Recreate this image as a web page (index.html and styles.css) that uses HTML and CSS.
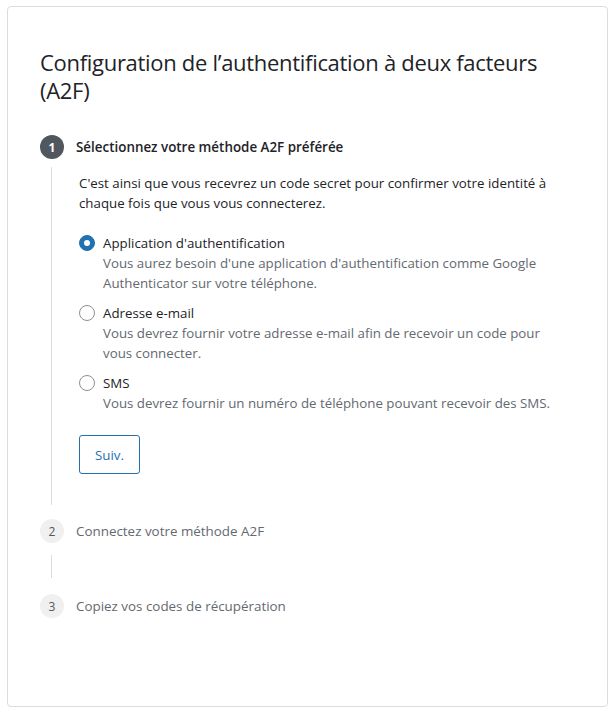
FILE: index.html
```html
<!DOCTYPE html>
<html lang="fr">
<head>
<meta charset="utf-8">
<link rel="stylesheet" href="styles.css">
</head>
<body>
<div class="card">
  <h1 class="title">Configuration de l’authentification à deux facteurs (A2F)</h1>
  <div class="step">
    <div class="step-head active"><span class="num">1</span><span class="label">Sélectionnez votre méthode A2F préférée</span></div>
    <div class="step-body body-1">
      <p class="intro">C'est ainsi que vous recevrez un code secret pour confirmer votre identité à chaque fois que vous vous connecterez.</p>
      <div class="options">
        <div class="option">
          <span class="radio checked"></span>
          <div class="opt-text">
            <div class="opt-title">Application d'authentification</div>
            <div class="opt-desc">Vous aurez besoin d'une application d'authentification comme Google Authenticator sur votre téléphone.</div>
          </div>
        </div>
        <div class="option">
          <span class="radio"></span>
          <div class="opt-text">
            <div class="opt-title">Adresse e-mail</div>
            <div class="opt-desc">Vous devrez fournir votre adresse e-mail afin de recevoir un code pour vous connecter.</div>
          </div>
        </div>
        <div class="option">
          <span class="radio"></span>
          <div class="opt-text">
            <div class="opt-title">SMS</div>
            <div class="opt-desc">Vous devrez fournir un numéro de téléphone pouvant recevoir des SMS.</div>
          </div>
        </div>
      </div>
      <button class="btn">Suiv.</button>
    </div>
  </div>
  <div class="step">
    <div class="step-head"><span class="num">2</span><span class="label">Connectez votre méthode A2F</span></div>
    <div class="step-body body-2"></div>
  </div>
  <div class="step">
    <div class="step-head"><span class="num">3</span><span class="label">Copiez vos codes de récupération</span></div>
  </div>
</div>
</body>
</html>
```

FILE: styles.css
```css
* { box-sizing: border-box; }
body {
  margin: 0;
  background: #fff;
  font-family: "Open Sans", "Noto Sans", sans-serif;
  color: #1d2327;
}
.card {
  margin: 6px 0 0 7px;
  width: 601px;
  height: 701px;
  border: 1px solid #dcdcde;
  border-radius: 4px;
  padding: 41px 32px 0 32px;
}
.title {
  margin: 0;
  font-size: 22px;
  line-height: 28px;
  font-weight: 500;
  color: #1d2327;
  letter-spacing: -0.3px;
}
.step-head {
  display: flex;
  align-items: center;
  gap: 12px;
  height: 24px;
}
.title + .step .step-head { margin-top: 31px; }
.num {
  width: 24px;
  height: 24px;
  border-radius: 50%;
  background: #f0f0f1;
  color: #50575e;
  font-size: 12px;
  display: flex;
  align-items: center;
  justify-content: center;
  flex: none;
}
.active .num {
  background: #50575e;
  color: #fff;
  font-weight: 700;
}
.label {
  font-size: 13.4px;
  color: #646970;
}
.active .label {
  color: #1d2327;
  font-weight: 600;
}
.step-body {
  margin-left: 11px;
  border-left: 1px solid #dcdcde;
  padding-left: 27px;
}
.body-1 {
  margin-top: 8px;
  margin-bottom: 14px;
  padding-top: 6px;
  padding-bottom: 31px;
}
.body-2 {
  margin-top: 12px;
  margin-bottom: 16px;
  height: 23px;
}
.intro {
  margin: 0 0 20px;
  font-size: 13.3px;
  line-height: 20px;
}
.options {
  display: flex;
  flex-direction: column;
  gap: 10px;
}
.option {
  display: flex;
  gap: 8px;
}
.opt-text {
  max-width: 463px;
}
.radio {
  flex: none;
  width: 16px;
  height: 16px;
  margin-top: 2px;
  border: 1px solid #8c8f94;
  border-radius: 50%;
  background: #fff;
  display: flex;
  align-items: center;
  justify-content: center;
}
.radio.checked {
  background: #2271b1;
  border-color: #2271b1;
}
.radio.checked::after {
  content: "";
  width: 6px;
  height: 6px;
  border-radius: 50%;
  background: #fff;
}
.opt-title {
  font-size: 13.3px;
  line-height: 20px;
  color: #1d2327;
}
.opt-desc {
  font-size: 13.3px;
  line-height: 20px;
  color: #646970;
}
.btn {
  display: block;
  margin-top: 22px;
  height: 39px;
  padding: 0 15px;
  border: 1px solid #2271b1;
  border-radius: 3px;
  background: #fff;
  color: #2271b1;
  font-family: inherit;
  font-size: 13.3px;
}
```
